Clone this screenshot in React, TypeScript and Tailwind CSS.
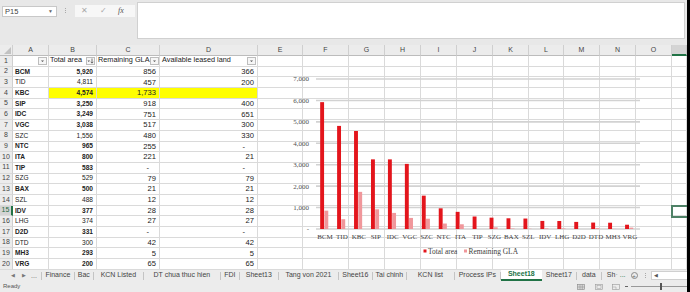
import React from "react";

type Row = [string, boolean, string, string, string];

const data: Row[] = [
  ["BCM", true, "5,920", "856", "366"],
  ["TID", false, "4,811", "457", "200"],
  ["KBC", true, "4,574", "1,733", ""],
  ["SIP", true, "3,250", "918", "400"],
  ["IDC", true, "3,249", "751", "651"],
  ["VGC", true, "3,038", "517", "300"],
  ["SZC", false, "1,556", "480", "330"],
  ["NTC", true, "965", "255", "-"],
  ["ITA", true, "800", "221", "21"],
  ["TIP", true, "583", "-", "-"],
  ["SZG", false, "529", "79", "79"],
  ["BAX", true, "500", "21", "21"],
  ["SZL", false, "488", "12", "12"],
  ["IDV", true, "377", "28", "28"],
  ["LHG", false, "374", "27", "27"],
  ["D2D", true, "331", "-", "-"],
  ["DTD", false, "300", "42", "42"],
  ["MH3", true, "293", "5", "5"],
  ["VRG", true, "200", "65", "65"],
];

const letters = ["", "A", "B", "C", "D", "E", "F", "G", "H", "I", "J", "K", "L", "M", "N", "O", ""];

const toNum = (s: string) => (s === "-" || s === "" ? 0 : Number(s.replace(",", "")));

const FilterBtn = ({ sort }: { sort?: boolean }) => (
  <span className="flex h-[8px] w-[9px] shrink-0 items-center justify-center border border-[#bdbdbd] bg-[#f6f6f6]">
    <svg width="7" height="6" viewBox="0 0 7 6">
      {sort ? (
        <>
          <path d="M0.5 2.5 L3 2.5 L1.75 4 Z" fill="#555" />
          <path d="M5 0.5 V5 M3.8 3.8 L5 5.2 L6.2 3.8" stroke="#555" strokeWidth="0.8" fill="none" />
        </>
      ) : (
        <path d="M2 2.5 L5 2.5 L3.5 4 Z" fill="#555" />
      )}
    </svg>
  </span>
);

const Chart = () => {
  const x0 = 316.5;
  const step = 16.94;
  const base = 229;
  const scale = 150 / 7000;
  const ticks = [0, 1000, 2000, 3000, 4000, 5000, 6000, 7000];
  return (
    <svg className="absolute left-[258px] top-0" width="429" height="225" viewBox="258 45 429 225">
      {ticks.map((t) => {
        const y = base - t * scale;
        return (
          <g key={t}>
            <line x1="316" x2="640" y1={y} y2={y} stroke="#d2d2d2" strokeWidth="1.6" />
            <text
              x="309"
              y={y + 2.4}
              textAnchor="end"
              fontSize="7"
              fill="#505050"
              fontFamily="'Liberation Serif', serif"
            >
              {t === 0 ? "-" : t.toLocaleString("en-US")}
            </text>
          </g>
        );
      })}
      {data.map((r, i) => {
        const cx = x0 + step * (i + 0.5);
        const tv = toNum(r[2]);
        const rv = toNum(r[3]);
        return (
          <g key={r[0]}>
            <rect x={cx - 4.8} y={base - tv * scale} width="3.9" height={tv * scale} fill="#e3151c" />
            <rect x={cx - 0.6} y={base - rv * scale} width="3.9" height={rv * scale} fill="#f0979b" />
            <text
              x={cx}
              y="238.5"
              textAnchor="middle"
              fontSize="7"
              fill="#404040"
              fontFamily="'Liberation Serif', serif"
            >
              {r[0]}
            </text>
          </g>
        );
      })}
      <rect x="423.5" y="249.5" width="3" height="3" fill="#e3151c" />
      <text x="428" y="253.5" fontSize="7.4" fill="#404040" fontFamily="'Liberation Serif', serif">
        Total area
      </text>
      <rect x="464" y="249.5" width="3" height="3" fill="#f0979b" />
      <text x="468.5" y="253.5" fontSize="7.4" fill="#404040" fontFamily="'Liberation Serif', serif">
        Remaining GLA
      </text>
    </svg>
  );
};

const tabs: [string, string][] = [
  ["Finance", "w-[32px]"],
  ["Bac", "w-[18px]"],
  ["KCN Listed", "w-[49px]"],
  ["DT chua thuc hien", "w-[76px]"],
  ["FDI", "w-[18px]"],
  ["Sheet13", "w-[38px]"],
  ["Tang von 2021", "w-[59px]"],
  ["Sheet16", "w-[33px]"],
  ["Tai chinh", "w-[33px]"],
  ["KCN list", "w-[47px]"],
  ["Process IPs", "w-[45px]"],
];

const Sep = () => <span className="h-[8px] w-px shrink-0 bg-[#c4c4c4]" />;

export default function App() {
  return (
    <div className="relative flex h-[292px] w-[690px] flex-col overflow-hidden bg-[#e8e8e8] font-['Liberation_Sans',sans-serif] text-[#333]">
      {/* formula bar */}
      <div className="flex h-[45px] shrink-0 items-start">
        <div className="ml-[2px] mt-[6px] flex h-[11px] w-[55px] items-center justify-between border border-[#c8c8c8] bg-white pl-[2px] pr-[3px] text-[7.5px] text-[#444]">
          <span>P15</span>
          <span className="text-[5px] text-[#666]">▼</span>
        </div>
        <div className="ml-[8px] mt-[8px] flex flex-col gap-[1px]">
          <span className="h-px w-px bg-[#aaa]" />
          <span className="h-px w-px bg-[#aaa]" />
          <span className="h-px w-px bg-[#aaa]" />
        </div>
        <div className="ml-[9px] mt-[5px] flex h-[12px] w-[60px] items-center bg-[#f7f7f7] text-[8px]">
          <span className="ml-[6px] text-[#a8a8a8]">✕</span>
          <span className="ml-[12px] text-[#a8a8a8]">✓</span>
          <span className="ml-[11px] font-['Liberation_Serif',serif] italic text-[#555]">fx</span>
        </div>
        <div className="ml-[2px] mt-[2px] h-[37px] w-[548px] border border-[#d0d0d0] bg-white" />
      </div>

      {/* grid */}
      <div className="relative h-[225px] shrink-0 overflow-hidden bg-white">
        <div className="grid w-[687px] grid-cols-[13px_36px_48px_63px_98px_45px_46px_36px_36px_36px_36px_36px_35px_36px_36px_36px_15px] grid-rows-[11px_repeat(20,10.7px)] text-[#222]">
          {letters.map((l, i) => (
            <div
              key={"h" + i}
              className={
                i === 16
                  ? "border-b-2 border-r border-b-[#217346] border-r-[#c6c6c6] bg-[#d4d4d4]"
                  : "relative flex items-center justify-center border-b border-r border-b-[#bcbcbc] border-r-[#cfcfcf] bg-[#ececec] text-[7px] text-[#444]"
              }
            >
              {i === 0 ? (
                <svg className="absolute bottom-[1px] right-[1px]" width="7" height="7" viewBox="0 0 7 7">
                  <path d="M7 0 L7 7 L0 7 Z" fill="#c2c2c2" />
                </svg>
              ) : (
                l
              )}
            </div>
          ))}

          {/* row 1 */}
          <div className="flex items-center justify-center border-b border-r border-b-[#dadada] border-r-[#cfcfcf] bg-[#ececec] text-[7px] text-[#444]">
            1
          </div>
          <div className="flex items-center justify-end border-b border-r border-[#dadada] pr-[1px]">
            <FilterBtn />
          </div>
          <div className="flex items-center justify-between border-b border-r border-[#dadada] pl-[1px] pr-[1px] text-[7.3px]">
            <span className="whitespace-nowrap">Total area</span>
            <FilterBtn sort />
          </div>
          <div className="flex items-center justify-between border-b border-r border-[#dadada] pl-[1px] pr-[1px] text-[7.3px]">
            <span className="whitespace-nowrap">Remaining GLA</span>
            <FilterBtn />
          </div>
          <div className="flex items-center justify-between border-b border-r border-[#dadada] pl-[2px] pr-[1px] text-[7.3px]">
            <span className="whitespace-nowrap">Available leased land</span>
            <FilterBtn />
          </div>
          {Array.from({ length: 12 }).map((_, j) => (
            <div key={"r1" + j} className="border-b border-r border-[#dadada]" />
          ))}

          {data.map((r, ri) => {
            const rowNo = ri + 2;
            const sel = rowNo === 15;
            const yellow = rowNo === 4 ? "bg-[#ffff00]" : "";
            const bold = r[1] ? "font-bold" : "";
            return (
              <React.Fragment key={r[0]}>
                <div
                  className={
                    sel
                      ? "flex items-center justify-center border-b border-r-2 border-b-[#dadada] border-r-[#217346] bg-[#d4d4d4] text-[7px] text-[#1e6b40]"
                      : "flex items-center justify-center border-b border-r border-b-[#dadada] border-r-[#cfcfcf] bg-[#ececec] text-[7px] text-[#444]"
                  }
                >
                  {rowNo}
                </div>
                <div className={`flex items-center border-b border-r border-[#dadada] pl-[2px] text-[6.6px] ${bold}`}>
                  {r[0]}
                </div>
                <div
                  className={`flex items-center justify-end border-b border-r border-[#dadada] pr-[3px] text-[6.6px] ${bold} ${yellow}`}
                >
                  {r[2]}
                </div>
                <div
                  className={`flex items-center justify-end border-b border-r border-[#dadada] text-[7.6px] ${
                    r[3] === "-" ? "pr-[10px]" : "pr-[3px]"
                  } ${yellow}`}
                >
                  {r[3]}
                </div>
                <div
                  className={`flex items-center justify-end border-b border-r border-[#dadada] text-[7.6px] ${
                    r[4] === "-" ? "pr-[12px]" : "pr-[3px]"
                  } ${yellow}`}
                >
                  {r[4]}
                </div>
                {Array.from({ length: 12 }).map((_, j) => (
                  <div key={"c" + j} className="border-b border-r border-[#dadada]" />
                ))}
              </React.Fragment>
            );
          })}
        </div>

        <Chart />

        {/* selected cell P15 */}
        <div className="absolute left-[671px] top-[160px] h-[13px] w-[18px] border-2 border-[#4e8166]" />
      </div>

      {/* sheet tabs */}
      <div className="flex h-[11px] shrink-0 items-center bg-[#ececec] text-[7px] text-[#444]">
        <span className="ml-[11px] text-[5px] text-[#777]">◀</span>
        <span className="ml-[7px] text-[5px] text-[#777]">▶</span>
        <span className="ml-[5px] text-[7px] leading-none text-[#666]">...</span>
        <span className="ml-[4px]" />
        <Sep />
        {tabs.map(([name, w]) => (
          <React.Fragment key={name}>
            <span className={`${w} shrink-0 whitespace-nowrap text-center`}>{name}</span>
            <Sep />
          </React.Fragment>
        ))}
        <span className="flex h-[11px] w-[41px] shrink-0 items-center justify-center border-b-2 border-[#217346] bg-white font-bold text-[#217346]">
          Sheet18
        </span>
        <span className="w-[34px] shrink-0 text-center">Sheet17</span>
        <Sep />
        <span className="w-[24px] shrink-0 text-center">data</span>
        <Sep />
        <span className="ml-[5px] whitespace-nowrap">
          Sh<span className="text-[#888]">·</span> <span className="text-[#217346]">...</span>
        </span>
        <span className="ml-[5px] flex h-[7px] w-[7px] items-center justify-center rounded-full border border-[#888] text-[6px] leading-none text-[#666]">
          +
        </span>
        <span className="ml-[7px] flex flex-col gap-[1px]">
          <span className="h-px w-px bg-[#aaa]" />
          <span className="h-px w-px bg-[#aaa]" />
          <span className="h-px w-px bg-[#aaa]" />
        </span>
        <span className="ml-[5px] flex h-[9px] flex-1 items-center border border-[#d0d0d0] bg-white pl-[2px] text-[5px] text-[#555]">
          ◀
        </span>
      </div>

      {/* status bar */}
      <div className="flex h-[11px] shrink-0 items-center bg-[#ececec] text-[6px] text-[#555]">
        <span className="ml-[3px]">Ready</span>
        <div className="ml-auto flex items-center">
          <svg width="8" height="6" viewBox="0 0 8 6">
            <rect x="0.5" y="0.5" width="7" height="5" fill="#d8d8d8" stroke="#888" strokeWidth="0.6" />
            <path d="M3 0.5 V5.5 M5.3 0.5 V5.5 M0.5 3 H7.5" stroke="#888" strokeWidth="0.5" />
          </svg>
          <svg className="ml-[10px]" width="8" height="6" viewBox="0 0 8 6">
            <rect x="0.5" y="0.5" width="7" height="5" fill="none" stroke="#999" strokeWidth="0.6" />
            <rect x="2" y="1.5" width="4" height="3" fill="none" stroke="#999" strokeWidth="0.5" />
          </svg>
          <svg className="ml-[9px]" width="8" height="6" viewBox="0 0 8 6">
            <rect x="0.5" y="0.5" width="7" height="5" fill="none" stroke="#999" strokeWidth="0.6" />
            <path d="M0.5 3 H4 V5.5" stroke="#999" strokeWidth="0.5" fill="none" />
          </svg>
          <span className="ml-[5px] h-px w-[3px] bg-[#666]" />
          <span className="relative ml-[3px] mr-[1px] h-px w-[58px] bg-[#999]">
            <span className="absolute left-[29px] top-[-3px] h-[7px] w-[2px] bg-[#555]" />
          </span>
        </div>
      </div>

      {/* window edge */}
      <div className="absolute right-0 top-0 h-[292px] w-[3px] bg-black" />
    </div>
  );
}
